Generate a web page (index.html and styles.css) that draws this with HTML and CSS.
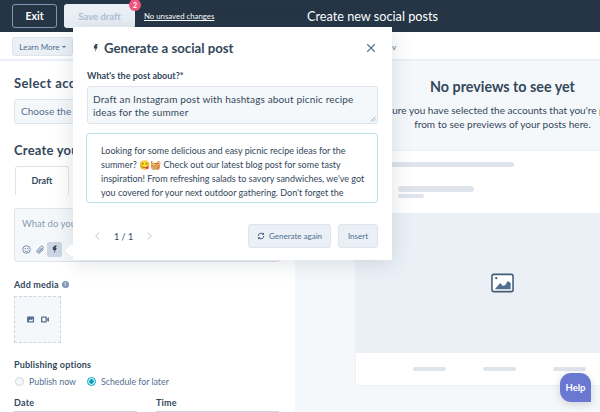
FILE: index.html
```html
<!DOCTYPE html>
<html lang="en">
<head>
<meta charset="utf-8">
<title>Create new social posts</title>
<link rel="stylesheet" href="styles.css">
</head>
<body>
<header class="topbar">
  <button class="btn-exit">Exit</button>
  <div class="save-wrap"><button class="btn-save">Save draft</button><span class="badge">2</span></div>
  <a class="unsaved">No unsaved changes</a>
  <h1 class="page-title">Create new social posts</h1>
</header>
<div class="subbar">
  <button class="learn">Learn More <span class="caret"></span></button>
  <span class="sub-right">v</span>
</div>
<main class="main">
  <section class="left">
    <h2 class="h-acc">Select accounts</h2>
    <div class="choose">Choose the accounts</div>
    <h2 class="h-create">Create your post</h2>
    <div class="tabs"><div class="tab">Draft</div></div>
    <div class="composer">
      <div class="placeholder">What do you want to share?</div>
      <div class="tools">
        <svg class="tool" viewBox="0 0 12 12"><circle cx="6" cy="6" r="5" fill="none" stroke="#516f90"/><circle cx="4.300" cy="4.800" r=".8" fill="#516f90"/><circle cx="7.700" cy="4.800" r=".8" fill="#516f90"/><path d="M3.500 7.400c1.200 1.500 3.800 1.500 5 0" fill="none" stroke="#516f90"/></svg>
        <svg class="tool" viewBox="0 0 12 12"><path d="M10.500 5 5.600 10c-1.100 1.100-2.800 1.100-3.700.1-1-1-.9-2.500.2-3.600l4.400-4.600c.7-.7 1.800-.7 2.500 0 .7.700.7 1.700 0 2.400L4.800 8.800c-.3.3-.8.300-1.100 0-.3-.3-.3-.8 0-1.100l3.700-3.800" fill="none" stroke="#516f90" stroke-width="1.100"/></svg>
        <span class="tool-active"><svg class="spark" viewBox="0 0 12 14"><path d="M6 0h4L7.800 4.500H10L5 14l1-6H3l.6-3.500L2 3.500 4.200 3z" fill="#33475b"/></svg></span>
      </div>
    </div>
    <div class="label media-label">Add media <span class="info">i</span></div>
    <div class="media-box">
      <svg class="media-ic" viewBox="0 0 9 8"><rect width="8" height="7" y=".5" rx="1" fill="#516f90"/><path d="M1.500 6 4 3.800 5 4.800 6.500 3v3z" fill="#fff"/></svg>
      <svg class="media-ic" viewBox="0 0 9 8"><rect width="6.500" height="7" y=".5" rx="1" fill="#516f90"/><rect x="1.500" y="2" width="3.500" height="4" fill="#fff"/><path d="M7 2.500 9 1.500v5L7 5.500z" fill="#516f90"/></svg>
    </div>
    <div class="label pub-label">Publishing options</div>
    <div class="radios">
      <span class="radio"></span><span class="radio-text">Publish now</span>
      <span class="radio on"></span><span class="radio-text">Schedule for later</span>
    </div>
    <div class="dt">
      <div class="dt-col"><div class="label">Date</div><div class="dt-input"></div></div>
      <div class="dt-col"><div class="label">Time</div><div class="dt-input"></div></div>
    </div>
  </section>
  <section class="right">
    <div class="right-inner">
      <h2 class="prev-title">No previews to see yet</h2>
      <p class="prev-text">Make sure you have selected the accounts that you're publishing<br>from to see previews of your posts here.</p>
      <div class="card">
        <div class="card-top">
          <div class="sk sk-a"></div>
          <div class="sk sk-b"></div>
          <div class="sk sk-c"></div>
        </div>
        <div class="card-img">
          <svg class="img-ic" viewBox="0 0 24 20"><rect x="1" y="1" width="22" height="18" rx="2" fill="#fff" stroke="#425b76" stroke-width="1.600"/><circle cx="5.500" cy="5" r="1.200" fill="#425b76"/><path d="M4 16.500 9.500 10l3 3 2.500-1 2.500-4 3 2v6.500z" fill="#516f90"/></svg>
        </div>
        <div class="card-foot">
          <span class="sk sk-f"></span><span class="sk sk-f"></span><span class="sk sk-f"></span>
        </div>
      </div>
    </div>
  </section>
</main>

<div class="modal">
  <div class="m-head">
    <svg class="m-spark" viewBox="0 0 12 14"><path d="M6 0h4L7.800 4.500H10L5 14l1-6H3l.6-3.500L2 3.500 4.200 3z" fill="#33475b"/></svg>
    <h2 class="m-title">Generate a social post</h2>
    <svg class="m-close" viewBox="0 0 12 12"><path d="M1.500 1.500l9 9m0-9l-9 9" stroke="#516f90" stroke-width="1.300" fill="none"/></svg>
  </div>
  <div class="label m-label">What's the post about?*</div>
  <div class="m-input">Draft an Instagram post with hashtags about picnic recipe ideas for the summer
    <svg class="grip" viewBox="0 0 6 6"><path d="M5.500.5l-5 5M5.500 3l-2.500 2.500" stroke="#7c98b6" fill="none" stroke-width=".7"/></svg>
  </div>
  <div class="m-result">Looking for some delicious and easy picnic recipe ideas for the summer? 😋🧺 Check out our latest blog post for some tasty inspiration! From refreshing salads to savory sandwiches, we've got you covered for your next outdoor gathering. Don't forget the</div>
  <div class="m-foot">
    <svg class="chev" viewBox="0 0 7 12"><path d="M6 1 1 6l5 5" fill="none" stroke="#a9bdd2" stroke-width="1.200"/></svg>
    <span class="pager">1 / 1</span>
    <svg class="chev" viewBox="0 0 7 12"><path d="M1 1l5 5-5 5" fill="none" stroke="#a9bdd2" stroke-width="1.200"/></svg>
    <span class="spacer"></span>
    <button class="m-btn gen"><svg class="refresh" viewBox="0 0 12 12"><path d="M1.800 6a4.200 4.200 0 0 1 7.400-2.700M10.200 6a4.200 4.200 0 0 1-7.400 2.700" fill="none" stroke="#425b76" stroke-width="1.500"/><path d="M10.500 .8v3.500H7M1.500 11.200V7.700H5" fill="#425b76"/></svg>Generate again</button>
    <button class="m-btn ins">Insert</button>
  </div>
</div>
<div class="notch"></div>
<div class="help">Help</div>
</body>
</html>
```
FILE: styles.css
```css
* { box-sizing: border-box; }
html, body { margin: 0; height: 412px; overflow: hidden; }
body { font-family: Lato, "Noto Sans", sans-serif; color: #33475b; background: #fff; position: relative; width: 600px; }
button { font-family: inherit; }

.topbar { height: 32px; background: #253545; display: flex; align-items: center; padding-left: 12px; position: relative; }
.btn-exit { width: 45px; height: 24px; background: #253545; border: 1px solid #7c98b6; border-radius: 3px; color: #fff; font-size: 10.500px; font-weight: 700; padding: 0; }
.save-wrap { position: relative; margin-left: 7px; }
.btn-save { width: 71px; height: 24px; background: #eaf0f6; border: 0; border-radius: 3px; color: #b0c1d4; font-size: 9.500px; font-weight: 700; padding: 0; display: block; }
.badge { position: absolute; top: -5px; right: -6px; width: 12px; height: 12px; border-radius: 50%; background: #f2547d; color: #fff; font-size: 7px; font-weight: 700; text-align: center; line-height: 12px; }
.unsaved { margin-left: 9px; color: #fff; font-size: 7.800px; text-decoration: underline; white-space: nowrap; }
.page-title { margin: 0 0 0 auto; padding-right: 162px; color: #fff; font-size: 12.700px; font-weight: 400; white-space: nowrap; }

.subbar { height: 29px; border-bottom: 2px solid #eaf0f6; background: #fff; display: flex; align-items: center; padding: 2px 0 0 12px; }
.learn { width: 61px; height: 19px; background: #eaf0f6; border: 1px solid #dfe3eb; border-radius: 3px; color: #516f90; font-size: 8px; padding: 0; }
.caret { display: inline-block; border: 2.500px solid transparent; border-top-color: #516f90; border-bottom: 0; vertical-align: middle; }
.sub-right { margin-left: 319px; font-size: 8px; color: #516f90; }

.main { display: flex; height: 351px; }
.left { width: 295px; padding: 15px 14px 0; flex: none; }
.right { flex: 1; min-width: 0; background: #f5f8fa; overflow: hidden; }
.right-inner { width: 415px; padding-top: 17px; display: flex; flex-direction: column; align-items: center; }

.h-acc, .h-create { margin: 0; font-size: 13px; font-weight: 700; color: #33475b; white-space: nowrap; letter-spacing: .4px; }
.h-acc { line-height: 14px; }
.choose { margin-top: 9px; height: 25px; width: 200px; border: 1px solid #dfe3eb; background: #f5f8fa; border-radius: 3px; font-size: 10px; padding: 0 6px; line-height: 23px; color: #516f90; white-space: nowrap; }
.h-create { margin-top: 19px; line-height: 14px; letter-spacing: .2px; }
.tabs { display: flex; margin-top: 9px; }
.tab { width: 54px; height: 29px; margin-left: 1px; border: 1px solid #dfe3eb; border-bottom: 0; border-radius: 3px 3px 0 0; text-align: center; font-size: 9px; font-weight: 700; line-height: 28px; }
.composer { margin-top: 13px; height: 54px; width: 266px; border: 1px solid #dfe3eb; border-radius: 3px; background: #f5f8fa; padding: 9px 7px 0; }
.placeholder { font-size: 9.500px; color: #8a9bb0; line-height: 11px; white-space: nowrap; }
.tools { display: flex; align-items: center; gap: 5px; margin-top: 7px; height: 27px; }
.tool { width: 9px; height: 9px; }
.tool-active { width: 15px; height: 15px; background: #cbd6e2; border-radius: 2px; display: flex; align-items: center; justify-content: center; margin-left: -3px; }
.spark { width: 7px; height: 9px; }

.label { font-size: 9px; font-weight: 700; color: #33475b; line-height: 11px; white-space: nowrap; letter-spacing: .2px; }
.media-label { margin-top: 17px; display: flex; align-items: center; gap: 3px; }
.info { width: 7px; height: 7px; border-radius: 50%; background: #7c98b6; color: #fff; font-size: 5px; line-height: 7px; text-align: center; }
.media-box { margin-top: 6px; width: 47px; height: 47px; background: #f5f8fa; border: 1px dashed #cbd6e2; display: flex; align-items: center; justify-content: center; gap: 6px; }
.media-ic { width: 8px; height: 7px; }
.pub-label { margin-top: 16px; }
.radios { display: flex; align-items: center; margin-top: 5px; height: 12px; font-size: 8.800px; color: #516f90; }
.radio { width: 9px; height: 9px; border: 1px solid #cbd6e2; border-radius: 50%; margin-left: 1px; flex: none; background: #f5f8fa; }
.radio.on { border-color: #00a4bd; background: radial-gradient(circle, #00a4bd 0 2px, #e5f5f8 2.500px); margin-left: 11px; }
.radio-text { margin-left: 5px; white-space: nowrap; }
.dt { display: flex; margin-top: 10px; gap: 19px; }
.dt-col { width: 123px; }
.dt-input { height: 12px; margin-top: 3px; border-top: 1px solid #cbd6e2; }

.prev-title { margin: 0; font-size: 14.300px; font-weight: 700; color: #33475b; line-height: 18px; text-align: center; }
.prev-text { margin: 7px 0 0; font-size: 10.050px; line-height: 14px; color: #33475b; text-align: center; white-space: nowrap; }
.card { margin-top: 19px; width: 295px; height: 236px; border: 1px solid #eaf0f6; border-radius: 3px; background: #fff; flex: none; }
.card-top { height: 62px; padding-top: 11px; }
.sk { display: block; background: #dfe3eb; border-radius: 3px; }
.sk-a { width: 138px; height: 5px; margin-left: 20px; }
.sk-b { width: 76px; height: 6px; margin: 19px 0 0 42px; }
.sk-c { width: 26px; height: 4px; margin: 2px 0 0 42px; }
.card-img { height: 140px; background: #eaf0f6; display: flex; align-items: center; justify-content: center; }
.img-ic { width: 23px; height: 20px; }
.card-foot { height: 32px; display: flex; align-items: center; gap: 37px; padding-left: 57px; }
.sk-f { width: 33px; height: 4px; flex: none; }

.modal { position: absolute; left: 73px; top: 27px; width: 319px; height: 233px; background: #fff; box-shadow: 0 2px 20px rgba(45, 62, 80, .16); padding: 12px 14px 0 14px; }
.notch { position: absolute; left: 67px; top: 246px; width: 9px; height: 9px; background: #fff; transform: rotate(45deg); }
.m-head { display: flex; align-items: center; height: 17px; }
.m-spark { width: 7px; height: 10px; margin: 0 5px 0 5px; }
.m-title { margin: 0; font-size: 13.200px; font-weight: 700; white-space: nowrap; }
.m-close { width: 10px; height: 10px; margin-left: auto; margin-right: 2px; }
.m-label { margin-top: 14px; letter-spacing: 0; }
.m-input { position: relative; margin-top: 5px; height: 38px; border: 1px solid #dfe3eb; border-radius: 3px; background: #f5f8fa; font-size: 10px; line-height: 13px; padding: 6px 5px 0; letter-spacing: .15px; }
.grip { position: absolute; right: 1px; bottom: 1px; width: 6px; height: 6px; }
.m-result { margin: 9px 0 0 -1px; height: 70px; border: 1px solid #b5e5ec; border-radius: 3px; padding: 10px 10px 0 14px; font-size: 9px; line-height: 14px; overflow: hidden; }
.m-foot { display: flex; align-items: center; margin-top: 21px; height: 24px; }
.chev { width: 5px; height: 10px; margin-left: 8px; }
.pager { font-size: 9px; margin: 0 14px; }
.chev + .pager + .chev { margin-left: 0; }
.spacer { flex: 1; }
.m-btn { height: 24px; background: #eaf0f6; border: 1px solid #dfe3eb; border-radius: 3px; color: #516f90; font-size: 8px; padding: 0; display: flex; align-items: center; justify-content: center; margin-left: 7px; }
.gen { width: 83px; gap: 4px; }
.ins { width: 40px; }
.refresh { width: 8px; height: 8px; }

.help { position: absolute; left: 560px; top: 373px; width: 31px; height: 29px; background: #6a78d1; color: #fff; font-size: 9.500px; font-weight: 700; border-radius: 11px 11px 0 11px; text-align: center; line-height: 29px; box-shadow: 0 2px 8px rgba(45, 62, 80, .2); }
```
